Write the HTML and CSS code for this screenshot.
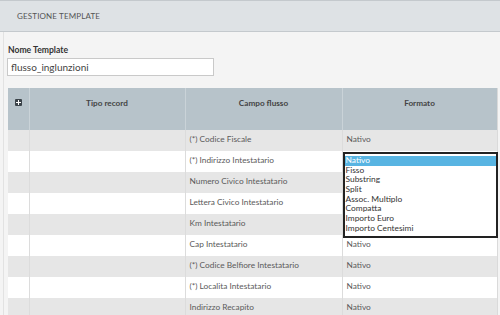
FILE: index.html
```html
<!DOCTYPE html>
<html lang="it">
<head>
    <meta charset="UTF-8">
    <title>Gestione Template</title>
    <link rel="stylesheet" href="styles.css">
</head>
<body>
    <div class="panel">
        <div class="panel-head">GESTIONE TEMPLATE</div>
        <div class="panel-body">
            <label class="field-label">Nome Template</label>
            <input class="field-input" type="text" value="flusso_inglunzioni">

            <table class="grid">
                <thead>
                    <tr>
                        <th class="col-add"><span class="add-icon"></span></th>
                        <th class="col-tipo">Tipo record</th>
                        <th class="col-campo">Campo flusso</th>
                        <th class="col-formato">Formato</th>
                    </tr>
                </thead>
                <tbody>
                    <tr class="odd"><td></td><td></td><td>(*) Codice Fiscale</td><td>Nativo</td></tr>
                    <tr><td></td><td></td><td>(*) Indirizzo Intestatario</td>
                        <td class="cell-select">
                            <div class="listbox">
                                <div class="option selected">Nativo</div>
                                <div class="option">Fisso</div>
                                <div class="option">Substring</div>
                                <div class="option">Split</div>
                                <div class="option">Assoc. Multiplo</div>
                                <div class="option">Compatta</div>
                                <div class="option">Importo Euro</div>
                                <div class="option">Importo Centesimi</div>
                            </div>
                        </td>
                    </tr>
                    <tr class="odd"><td></td><td></td><td>Numero Civico Intestatario</td><td></td></tr>
                    <tr><td></td><td></td><td>Lettera Civico Intestatario</td><td></td></tr>
                    <tr class="odd"><td></td><td></td><td>Km Intestatario</td><td></td></tr>
                    <tr><td></td><td></td><td>Cap Intestatario</td><td>Nativo</td></tr>
                    <tr class="odd"><td></td><td></td><td>(*) Codice Belfiore Intestatario</td><td>Nativo</td></tr>
                    <tr><td></td><td></td><td>(*) Localita Intestatario</td><td>Nativo</td></tr>
                    <tr class="odd"><td></td><td></td><td>Indirizzo Recapito</td><td>Nativo</td></tr>
                </tbody>
            </table>
        </div>
    </div>
</body>
</html>
```

FILE: styles.css
```css
/* base */
body {
    margin: 0;
    font-family: "Lato", "Open Sans", sans-serif;
    color: #555;
    background: #f4f4f4;
    overflow: hidden;
}

.panel {
    border-left: 1px solid #e2e2e2;
    margin-left: 3px;
    min-height: 315px;
}

/* testata */
.panel-head {
    height: 30px;
    line-height: 30px;
    margin-left: -4px;
    padding-left: 17px;
    background: #dee2e5;
    border-top: 1px solid #c4c9cd;
    border-bottom: 1px solid #c4c9cd;
    font-size: 8px;
    color: #555;
    letter-spacing: 0.15px;
}

.panel-body { padding: 13px 0 0 4px; }

/* nome template */
.field-label {
    display: block;
    font-size: 8.6px;
    font-weight: 700;
    color: #333;
    margin-bottom: 3px;
}
.field-input {
    display: block;
    width: 207px;
    height: 18px;
    margin-left: -1px;
    padding: 0 3px;
    box-sizing: border-box;
    border: 1px solid #c9c9c9;
    background: #fff;
    font-family: inherit;
    font-size: 10px;
    color: #444;
}

/* tabella */
.grid {
    margin-top: 12px;
    width: 489px;
    border-collapse: collapse;
    table-layout: fixed;
    font-size: 8.3px;
}
.col-add { width: 21px; }
.col-tipo { width: 156px; }
.col-campo { width: 157px; }
.col-formato { width: 155px; }

.grid th {
    height: 42px;
    box-sizing: border-box;
    padding: 10px 0 0;
    vertical-align: top;
    background: #b7c3ca;
    color: #444;
    font-size: 8.2px;
    font-weight: 700;
    border-left: 1px solid #cad3d8;
}
.grid th:first-child { border-left: none; }
.grid th:last-child { border-right: 1px solid #dadada; }

.add-icon {
    display: inline-block;
    position: relative;
    width: 7px;
    height: 7px;
    margin-top: -1px;
    background: #3b4349;
    border-radius: 1px;
}
.add-icon::before,
.add-icon::after {
    content: "";
    position: absolute;
    background: #fff;
}
.add-icon::before { left: 1px; top: 3px; width: 5px; height: 1px; }
.add-icon::after { left: 3px; top: 1px; width: 1px; height: 5px; }

.grid td {
    height: 21px;
    box-sizing: border-box;
    padding: 0 4px 3px;
    background: #fff;
    color: #5a5a5a;
    border-left: 1px solid #dcdcdc;
    white-space: nowrap;
}
.grid td:first-child { border-left: none; }
.grid td:last-child { border-right: 1px solid #dadada; }
.grid tr.odd td { background: #e6e6e6; }

/* select aperta */
.cell-select { position: relative; }
.listbox {
    position: absolute;
    left: 0;
    top: 1px;
    width: 155px;
    box-sizing: border-box;
    padding-top: 2px;
    padding-bottom: 2px;
    border: 2px solid #222;
    background: #fff;
    z-index: 2;
}
.option {
    height: 9.7px;
    line-height: 9.7px;
    padding-left: 1px;
    font-size: 8.4px;
    color: #333;
}
.option.selected {
    background: #58b4e2;
    color: #fff;
}
```
